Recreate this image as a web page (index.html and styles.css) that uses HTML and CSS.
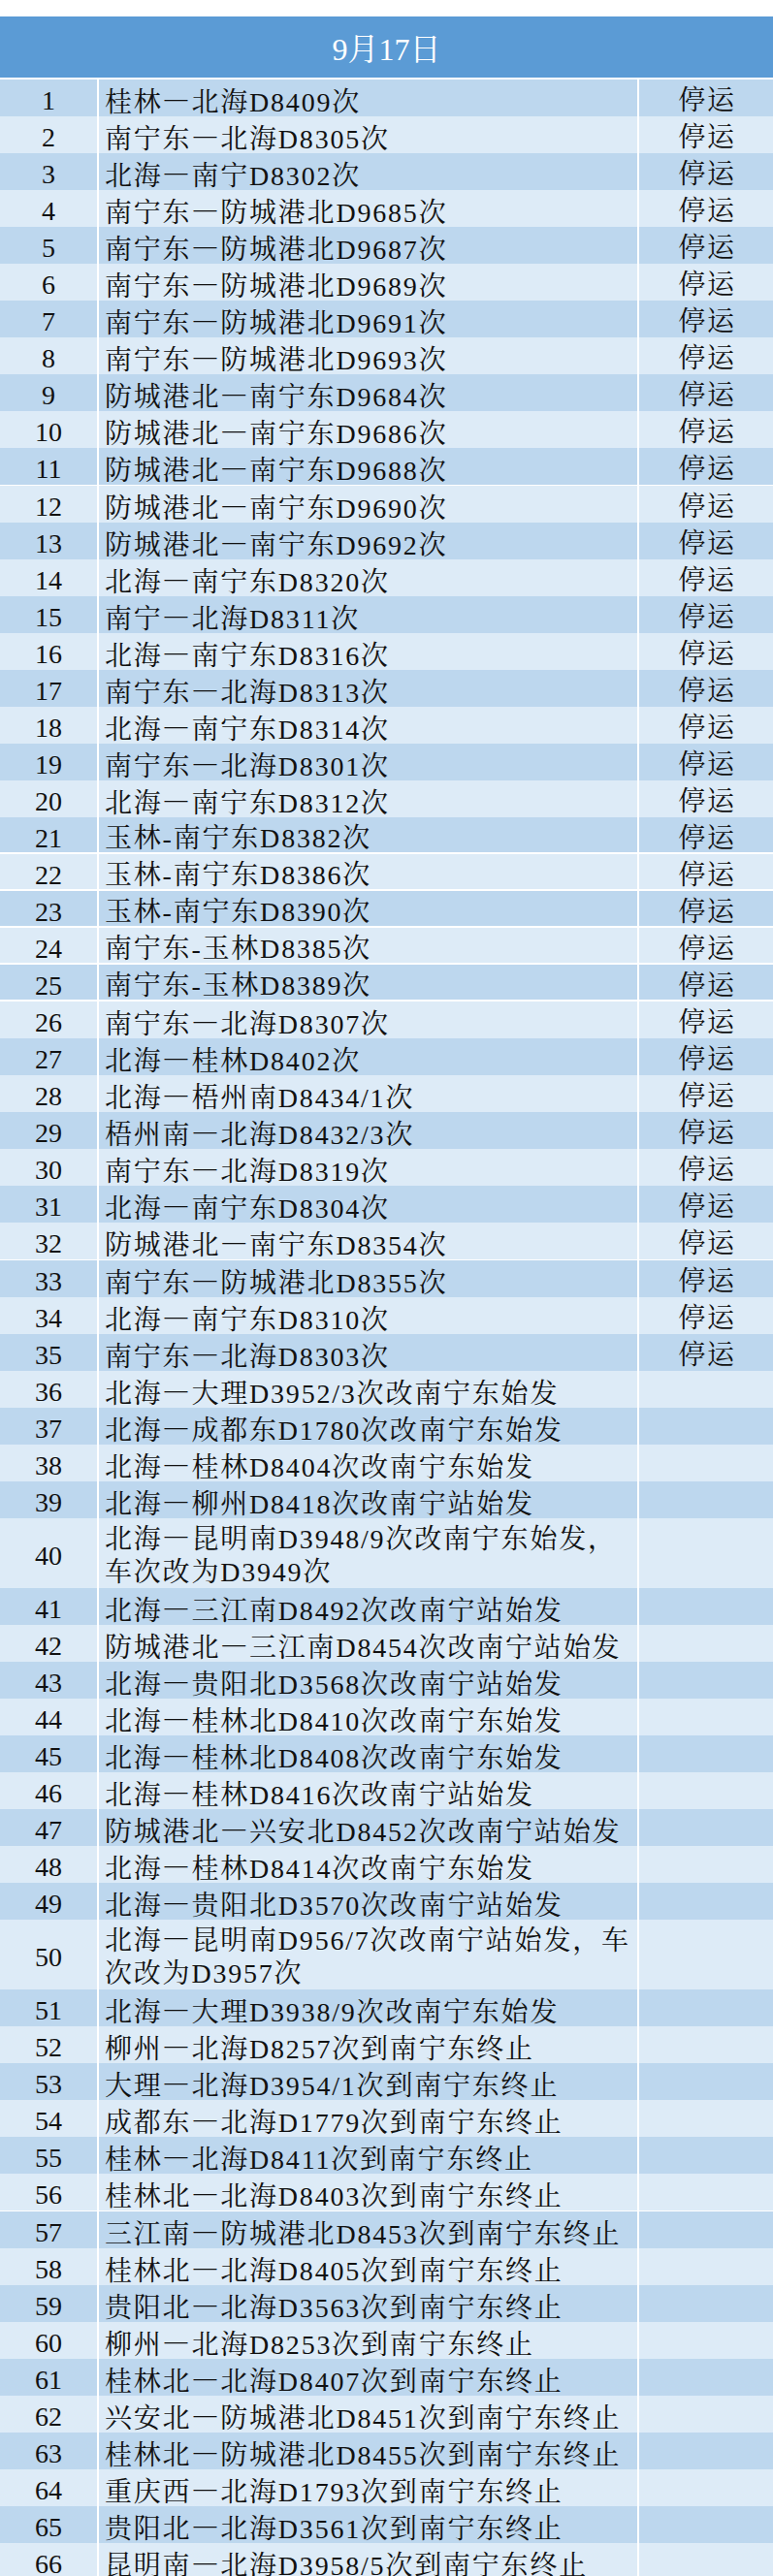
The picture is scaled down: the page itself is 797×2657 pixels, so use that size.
FILE: index.html
```html
<!DOCTYPE html>
<html lang="zh-CN">
<head>
<meta charset="utf-8">
<title>9月17日</title>
<link rel="stylesheet" href="styles.css">
</head>
<body>
<div class="sheet">
  <div class="title">9月17日</div>
  <div class="row odd"><div class="no">1</div><div class="train">桂林<span class="dash">—</span>北海D8409次</div><div class="status">停运</div></div>
  <div class="row even"><div class="no">2</div><div class="train">南宁东<span class="dash">—</span>北海D8305次</div><div class="status">停运</div></div>
  <div class="row odd"><div class="no">3</div><div class="train">北海<span class="dash">—</span>南宁D8302次</div><div class="status">停运</div></div>
  <div class="row even"><div class="no">4</div><div class="train">南宁东<span class="dash">—</span>防城港北D9685次</div><div class="status">停运</div></div>
  <div class="row odd"><div class="no">5</div><div class="train">南宁东<span class="dash">—</span>防城港北D9687次</div><div class="status">停运</div></div>
  <div class="row even"><div class="no">6</div><div class="train">南宁东<span class="dash">—</span>防城港北D9689次</div><div class="status">停运</div></div>
  <div class="row odd"><div class="no">7</div><div class="train">南宁东<span class="dash">—</span>防城港北D9691次</div><div class="status">停运</div></div>
  <div class="row even"><div class="no">8</div><div class="train">南宁东<span class="dash">—</span>防城港北D9693次</div><div class="status">停运</div></div>
  <div class="row odd"><div class="no">9</div><div class="train">防城港北<span class="dash">—</span>南宁东D9684次</div><div class="status">停运</div></div>
  <div class="row even"><div class="no">10</div><div class="train">防城港北<span class="dash">—</span>南宁东D9686次</div><div class="status">停运</div></div>
  <div class="row odd"><div class="no">11</div><div class="train">防城港北<span class="dash">—</span>南宁东D9688次</div><div class="status">停运</div></div>
  <div class="row even"><div class="no">12</div><div class="train">防城港北<span class="dash">—</span>南宁东D9690次</div><div class="status">停运</div></div>
  <div class="row odd"><div class="no">13</div><div class="train">防城港北<span class="dash">—</span>南宁东D9692次</div><div class="status">停运</div></div>
  <div class="row even"><div class="no">14</div><div class="train">北海<span class="dash">—</span>南宁东D8320次</div><div class="status">停运</div></div>
  <div class="row odd"><div class="no">15</div><div class="train">南宁<span class="dash">—</span>北海D8311次</div><div class="status">停运</div></div>
  <div class="row even"><div class="no">16</div><div class="train">北海<span class="dash">—</span>南宁东D8316次</div><div class="status">停运</div></div>
  <div class="row odd"><div class="no">17</div><div class="train">南宁东<span class="dash">—</span>北海D8313次</div><div class="status">停运</div></div>
  <div class="row even"><div class="no">18</div><div class="train">北海<span class="dash">—</span>南宁东D8314次</div><div class="status">停运</div></div>
  <div class="row odd"><div class="no">19</div><div class="train">南宁东<span class="dash">—</span>北海D8301次</div><div class="status">停运</div></div>
  <div class="row even"><div class="no">20</div><div class="train">北海<span class="dash">—</span>南宁东D8312次</div><div class="status">停运</div></div>
  <div class="row odd"><div class="no">21</div><div class="train">玉林-南宁东D8382次</div><div class="status">停运</div></div>
  <div class="row even"><div class="no">22</div><div class="train">玉林-南宁东D8386次</div><div class="status">停运</div></div>
  <div class="row odd"><div class="no">23</div><div class="train">玉林-南宁东D8390次</div><div class="status">停运</div></div>
  <div class="row even"><div class="no">24</div><div class="train">南宁东-玉林D8385次</div><div class="status">停运</div></div>
  <div class="row odd"><div class="no">25</div><div class="train">南宁东-玉林D8389次</div><div class="status">停运</div></div>
  <div class="row even"><div class="no">26</div><div class="train">南宁东<span class="dash">—</span>北海D8307次</div><div class="status">停运</div></div>
  <div class="row odd"><div class="no">27</div><div class="train">北海<span class="dash">—</span>桂林D8402次</div><div class="status">停运</div></div>
  <div class="row even"><div class="no">28</div><div class="train">北海<span class="dash">—</span>梧州南D8434/1次</div><div class="status">停运</div></div>
  <div class="row odd"><div class="no">29</div><div class="train">梧州南<span class="dash">—</span>北海D8432/3次</div><div class="status">停运</div></div>
  <div class="row even"><div class="no">30</div><div class="train">南宁东<span class="dash">—</span>北海D8319次</div><div class="status">停运</div></div>
  <div class="row odd"><div class="no">31</div><div class="train">北海<span class="dash">—</span>南宁东D8304次</div><div class="status">停运</div></div>
  <div class="row even"><div class="no">32</div><div class="train">防城港北<span class="dash">—</span>南宁东D8354次</div><div class="status">停运</div></div>
  <div class="row odd"><div class="no">33</div><div class="train">南宁东<span class="dash">—</span>防城港北D8355次</div><div class="status">停运</div></div>
  <div class="row even"><div class="no">34</div><div class="train">北海<span class="dash">—</span>南宁东D8310次</div><div class="status">停运</div></div>
  <div class="row odd"><div class="no">35</div><div class="train">南宁东<span class="dash">—</span>北海D8303次</div><div class="status">停运</div></div>
  <div class="row even"><div class="no">36</div><div class="train">北海<span class="dash">—</span>大理D3952/3次改南宁东始发</div><div class="status"></div></div>
  <div class="row odd"><div class="no">37</div><div class="train">北海<span class="dash">—</span>成都东D1780次改南宁东始发</div><div class="status"></div></div>
  <div class="row even"><div class="no">38</div><div class="train">北海<span class="dash">—</span>桂林D8404次改南宁东始发</div><div class="status"></div></div>
  <div class="row odd"><div class="no">39</div><div class="train">北海<span class="dash">—</span>柳州D8418次改南宁站始发</div><div class="status"></div></div>
  <div class="row even tall"><div class="no">40</div><div class="train">北海<span class="dash">—</span>昆明南D3948/9次改南宁东始发，<br>车次改为D3949次</div><div class="status"></div></div>
  <div class="row odd"><div class="no">41</div><div class="train">北海<span class="dash">—</span>三江南D8492次改南宁站始发</div><div class="status"></div></div>
  <div class="row even"><div class="no">42</div><div class="train">防城港北<span class="dash">—</span>三江南D8454次改南宁站始发</div><div class="status"></div></div>
  <div class="row odd"><div class="no">43</div><div class="train">北海<span class="dash">—</span>贵阳北D3568次改南宁站始发</div><div class="status"></div></div>
  <div class="row even"><div class="no">44</div><div class="train">北海<span class="dash">—</span>桂林北D8410次改南宁东始发</div><div class="status"></div></div>
  <div class="row odd"><div class="no">45</div><div class="train">北海<span class="dash">—</span>桂林北D8408次改南宁东始发</div><div class="status"></div></div>
  <div class="row even"><div class="no">46</div><div class="train">北海<span class="dash">—</span>桂林D8416次改南宁站始发</div><div class="status"></div></div>
  <div class="row odd"><div class="no">47</div><div class="train">防城港北<span class="dash">—</span>兴安北D8452次改南宁站始发</div><div class="status"></div></div>
  <div class="row even"><div class="no">48</div><div class="train">北海<span class="dash">—</span>桂林D8414次改南宁东始发</div><div class="status"></div></div>
  <div class="row odd"><div class="no">49</div><div class="train">北海<span class="dash">—</span>贵阳北D3570次改南宁站始发</div><div class="status"></div></div>
  <div class="row even tall"><div class="no">50</div><div class="train">北海<span class="dash">—</span>昆明南D956/7次改南宁站始发，车<br>次改为D3957次</div><div class="status"></div></div>
  <div class="row odd"><div class="no">51</div><div class="train">北海<span class="dash">—</span>大理D3938/9次改南宁东始发</div><div class="status"></div></div>
  <div class="row even"><div class="no">52</div><div class="train">柳州<span class="dash">—</span>北海D8257次到南宁东终止</div><div class="status"></div></div>
  <div class="row odd"><div class="no">53</div><div class="train">大理<span class="dash">—</span>北海D3954/1次到南宁东终止</div><div class="status"></div></div>
  <div class="row even"><div class="no">54</div><div class="train">成都东<span class="dash">—</span>北海D1779次到南宁东终止</div><div class="status"></div></div>
  <div class="row odd"><div class="no">55</div><div class="train">桂林<span class="dash">—</span>北海D8411次到南宁东终止</div><div class="status"></div></div>
  <div class="row even"><div class="no">56</div><div class="train">桂林北<span class="dash">—</span>北海D8403次到南宁东终止</div><div class="status"></div></div>
  <div class="row odd"><div class="no">57</div><div class="train">三江南<span class="dash">—</span>防城港北D8453次到南宁东终止</div><div class="status"></div></div>
  <div class="row even"><div class="no">58</div><div class="train">桂林北<span class="dash">—</span>北海D8405次到南宁东终止</div><div class="status"></div></div>
  <div class="row odd"><div class="no">59</div><div class="train">贵阳北<span class="dash">—</span>北海D3563次到南宁东终止</div><div class="status"></div></div>
  <div class="row even"><div class="no">60</div><div class="train">柳州<span class="dash">—</span>北海D8253次到南宁东终止</div><div class="status"></div></div>
  <div class="row odd"><div class="no">61</div><div class="train">桂林北<span class="dash">—</span>北海D8407次到南宁东终止</div><div class="status"></div></div>
  <div class="row even"><div class="no">62</div><div class="train">兴安北<span class="dash">—</span>防城港北D8451次到南宁东终止</div><div class="status"></div></div>
  <div class="row odd"><div class="no">63</div><div class="train">桂林北<span class="dash">—</span>防城港北D8455次到南宁东终止</div><div class="status"></div></div>
  <div class="row even"><div class="no">64</div><div class="train">重庆西<span class="dash">—</span>北海D1793次到南宁东终止</div><div class="status"></div></div>
  <div class="row odd"><div class="no">65</div><div class="train">贵阳北<span class="dash">—</span>北海D3561次到南宁东终止</div><div class="status"></div></div>
  <div class="row even"><div class="no">66</div><div class="train">昆明南<span class="dash">—</span>北海D3958/5次到南宁东终止</div><div class="status"></div></div>
</div>
</body>
</html>
```

FILE: styles.css
```css
html, body {
  margin: 0;
  padding: 0;
  background: #ffffff;
}

body {
  font-family: "Liberation Serif", "Noto Serif CJK SC", "Noto Sans CJK SC", serif;
  color: #111111;
}

.sheet {
  display: flex;
  flex-direction: column;
  gap: 2px;
  padding-top: 17px;
  width: 797px;
}

.title {
  height: 63px;
  box-sizing: border-box;
  padding-top: 6px;
  background: #5b9bd5;
  color: #ffffff;
  font-size: 32px;
  line-height: 57px;
  text-align: center;
}

.row {
  display: grid;
  grid-template-columns: 100px 555px 1fr;
  column-gap: 2px;
  height: 36.05px;
  font-size: 28px;
  letter-spacing: 1.8px;
}

.row.tall {
  height: 70px;
}

.row > div {
  box-sizing: border-box;
  padding-top: 7px;
  line-height: 29px;
  white-space: nowrap;
}

.odd > div {
  background: #bdd7ee;
}

.even > div {
  background: #ddebf7;
}

.no {
  text-align: center;
  letter-spacing: 0;
}

.train {
  padding-left: 6px;
}

.status {
  text-align: center;
  padding-left: 2px;
}

.tall .no {
  padding-top: 24px;
  line-height: 29px;
}

.tall .train {
  padding-top: 2px;
  line-height: 34px;
}

.dash {
  font-family: "Noto Sans CJK SC", sans-serif;
}
```
